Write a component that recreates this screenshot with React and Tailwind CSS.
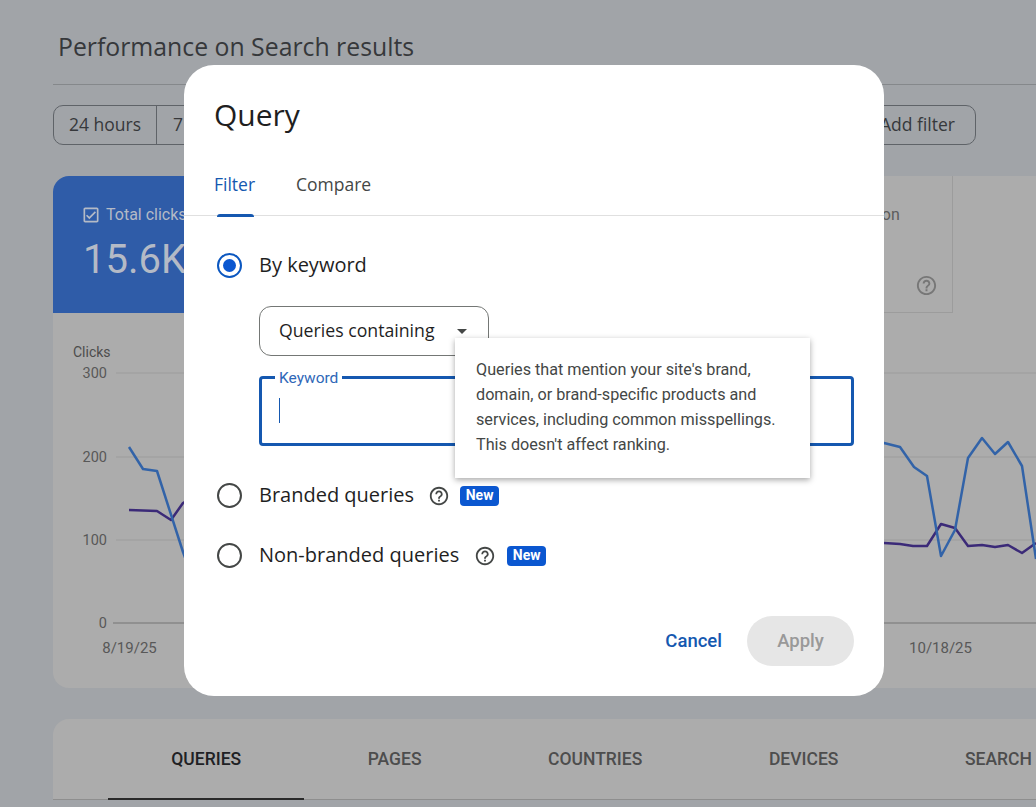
import React from 'react';
import { MdHelpOutline, MdOutlineCheckBox } from 'react-icons/md';

const clicksLine = '129,447 143,469 157,471 183,552 197,590 884,443 900,447 914,467 927,476 941,556 955,530 968,458 982,438 995,454 1008,442 1022,466 1036,559';
const imprLine = '129,510 157,511 171,520 183,503 197,495 884,543 900,544 913,546 927,546 941,524 955,528 968,546 982,545 995,547 1008,545 1022,553 1036,543';

const stats = [
  { label: 'Total clicks', value: '15.6K', active: true },
  { label: 'Total impressions', value: '' },
  { label: 'Average CTR', value: '' },
  { label: 'Average position', value: '', help: true },
];

const tabs = ['QUERIES', 'PAGES', 'COUNTRIES', 'DEVICES', 'SEARCH APPEARANCE'];

function Chart() {
  return (
    <svg width="1000" height="375" viewBox="53 313 1000 375" className="block" style={{ fontFamily: 'Roboto, sans-serif' }}>
      {[373, 457, 540].map((y) => (
        <line key={y} x1="116" x2="1053" y1={y} y2={y} stroke="#9c9c9c" strokeWidth="1" />
      ))}
      <line x1="113" x2="1053" y1="623" y2="623" stroke="#747474" strokeWidth="1" />
      <text x="73" y="357" fontSize="14" fill="#4c4c4c">Clicks</text>
      <text x="107" y="378" fontSize="14.5" fill="#585858" textAnchor="end">300</text>
      <text x="107" y="462" fontSize="14.5" fill="#585858" textAnchor="end">200</text>
      <text x="107" y="545" fontSize="14.5" fill="#585858" textAnchor="end">100</text>
      <text x="107" y="628" fontSize="14.5" fill="#585858" textAnchor="end">0</text>
      <text x="129.5" y="653" fontSize="15" fill="#585858" textAnchor="middle">8/19/25</text>
      <text x="940.5" y="653" fontSize="15" fill="#585858" textAnchor="middle">10/18/25</text>
      <polyline points={imprLine} fill="none" stroke="#3b2a78" strokeWidth="2.5" strokeLinejoin="round" />
      <polyline points={clicksLine} fill="none" stroke="#3263a8" strokeWidth="2.5" strokeLinejoin="round" />
    </svg>
  );
}

function Radio({ checked }) {
  return (
    <span className={`flex size-[25px] shrink-0 items-center justify-center rounded-full border-2 ${checked ? 'border-[#0b57c0]' : 'border-[#444746]'}`}>
      {checked && <span className="size-[13px] rounded-full bg-[#0b57d0]" />}
    </span>
  );
}

function NewBadge() {
  return (
    <span className="flex h-[20px] w-[39px] items-center justify-center rounded-[4px] bg-[#0b57d0] text-[14px] font-bold text-white">New</span>
  );
}

function Modal() {
  return (
    <div className="absolute left-[184px] top-[65px] flex h-[631px] w-[700px] flex-col rounded-[30px] bg-white">
      <h2 className="pl-[30px] pt-[28px] text-[30px] leading-[44px] text-[#1f1f1f] font-['Open_Sans',sans-serif]">Query</h2>
      <div className="mt-[31px] flex h-[48px] border-b border-[#e0e0e0] pl-[30px] text-[17.5px] font-['Open_Sans',sans-serif]">
        <div className="relative h-[48px] w-[42px] pt-[3px] font-medium text-[#1558b0]">
          Filter
          <span className="absolute bottom-[-1px] left-[3px] h-[3px] w-[37px] rounded-t-[3px] bg-[#1558b0]" />
        </div>
        <div className="ml-[40px] pt-[3px] text-[#444746]">Compare</div>
      </div>

      <div className="relative flex-1 pl-[33px]">
        <div className="mt-[37px] flex h-[25px] items-center gap-[17px]">
          <Radio checked />
          <span className="pb-[2px] text-[20px] text-[#1f1f1f] font-['Open_Sans',sans-serif]">By keyword</span>
        </div>
        <div className="ml-[42px] mt-[28px] flex h-[50px] w-[230px] items-center justify-between rounded-[12px] border border-[#747775] pl-[19px] pr-[21px]">
          <span className="pb-[1px] text-[17.7px] font-medium text-[#1f1f1f] font-['Open_Sans',sans-serif]">Queries containing</span>
          <span className="h-0 w-0 border-x-[5px] border-t-[5px] border-x-transparent border-t-[#444746]" />
        </div>
        <div className="relative ml-[42px] mt-[20px] h-[70px] w-[595px] rounded-[4px] border-[3px] border-[#1558b0]">
          <span className="absolute left-[13px] top-[-9px] bg-white px-[4px] text-[15.5px] leading-[16px] text-[#2f67b8] font-['Roboto',sans-serif]">Keyword</span>
          <span className="absolute left-[17px] top-[19px] h-[25px] w-px bg-[#1558b0]" />
        </div>
        <div className="mt-[37px] flex h-[25px] items-center">
          <Radio />
          <span className="ml-[17px] pb-[2px] text-[20px] text-[#1f1f1f] font-['Open_Sans',sans-serif]">Branded queries</span>
          <MdHelpOutline className="ml-[14px] text-[22px] text-[#444746]" />
          <span className="ml-[10px]"><NewBadge /></span>
        </div>
        <div className="mt-[35px] flex h-[25px] items-center">
          <Radio />
          <span className="ml-[17px] pb-[2px] text-[20px] text-[#1f1f1f] font-['Open_Sans',sans-serif]">Non-branded queries</span>
          <MdHelpOutline className="ml-[15px] text-[22px] text-[#444746]" />
          <span className="ml-[11px]"><NewBadge /></span>
        </div>

        {/* tooltip opened from the Branded queries help icon */}
        <div className="absolute left-[271px] top-[122px] h-[140px] w-[355px] bg-white px-[21px] pt-[19px] text-[16.2px] leading-[25px] text-[#444746] shadow-[0_2px_6px_rgba(0,0,0,0.35)] font-['Roboto',sans-serif]">
          Queries that mention your site's brand, domain, or brand-specific products and services, including common misspellings. This doesn't affect ranking.
        </div>
      </div>

      <div className="flex items-center justify-end gap-[25px] pb-[30px] pr-[30px]">
        <span className="pt-[2px] text-[18.5px] font-medium text-[#1558b0] font-['Roboto',sans-serif]">Cancel</span>
        <span className="flex h-[50px] w-[107px] items-center justify-center rounded-full bg-[#e6e6e6] pt-[2px] text-[18.5px] font-medium text-[#999999] font-['Roboto',sans-serif]">Apply</span>
      </div>
    </div>
  );
}

export default function App() {
  return (
    <div className="relative h-[807px] w-[1036px] overflow-hidden bg-[#a1a4a8] pl-[53px] font-['Roboto',sans-serif]">
      <div className="flex h-[85px] w-[1000px] items-center border-b border-[#85888b] pl-[5px] pt-[10px] text-[24.8px] text-[#36383b] font-['Open_Sans',sans-serif]">
        Performance on Search results
      </div>

      {/* Date range + filter */}
      <div className="mt-[20px] flex h-[40px] w-[923px] justify-between text-[17.5px] text-[#36383b] font-['Open_Sans',sans-serif]">
        <div className="flex rounded-[10px] border border-[#5f6368]">
          <span className="flex w-[103px] items-center justify-center border-r border-[#5f6368] pb-[1px]">24 hours</span>
          <span className="flex items-center px-[16px] pb-[1px]">7 days</span>
        </div>
        <div className="flex items-center rounded-[10px] border border-[#5f6368] pb-[1px] pl-[32px] pr-[20px]">Add filter</div>
      </div>

      {/* Stats + chart */}
      <div className="mt-[31px] w-[1020px] overflow-hidden rounded-l-[16px] bg-[#acacac]">
        <div className="flex h-[137px]">
          {stats.map((s) => (
            <div key={s.label} className={`relative w-[225px] pl-[30px] pt-[29px] ${s.active ? 'bg-[#2f5ca8] text-[#b4bac6]' : 'border-b border-r border-[#9c9c9c] text-[#5c5c5c]'}`}>
              <div className="-ml-[2px] flex items-center gap-[5px] text-[16px] leading-[18px]">
                <MdOutlineCheckBox className="text-[20px]" />
                <span>{s.label}</span>
              </div>
              <div className="mt-[11px] text-[40px] leading-[48px]">{s.value}</div>
              {s.help && <MdHelpOutline className="absolute bottom-[15px] right-[14px] text-[23px] text-[#777777]" />}
            </div>
          ))}
        </div>
        <Chart />
      </div>

      {/* Table tabs */}
      <div className="mt-[31px] w-[1020px] rounded-tl-[16px] bg-[#acacac]">
        <div className="flex h-[81px] whitespace-nowrap border-b border-[#8e8e8e] pl-[55px]">
          {tabs.map((t, i) => (
            <div key={t} className={`relative flex shrink-0 items-center px-[63.3px] text-[17.5px] font-medium ${i === 0 ? 'text-[#202124]' : 'text-[#4d4d4d]'}`}>
              {t}
              {i === 0 && <span className="absolute bottom-[-1px] left-0 right-0 h-[2px] bg-[#2a2a2a]" />}
            </div>
          ))}
        </div>
      </div>

      <Modal />
    </div>
  );
}
